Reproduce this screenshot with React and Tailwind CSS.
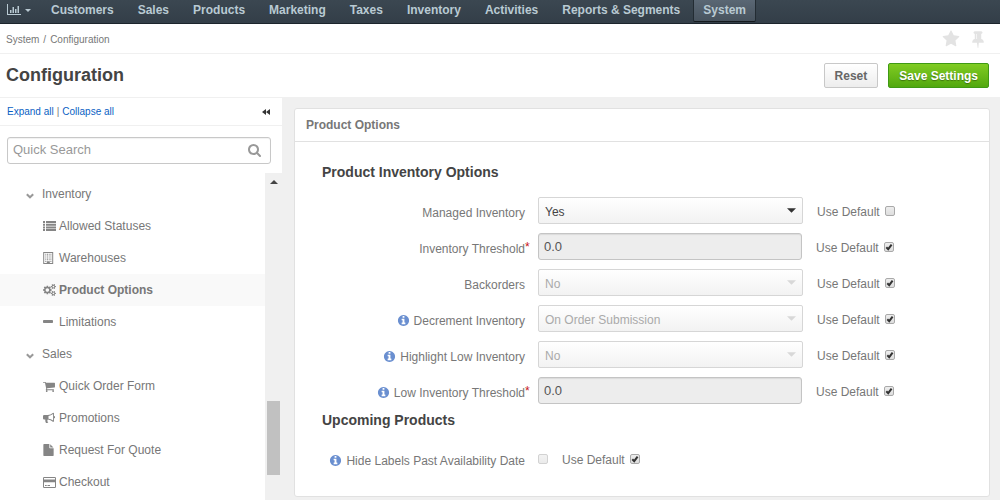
import React from "react";

const Glyph = ({ d, className, box = "0 0 1792 1792" }) => (
  <svg viewBox={box} className={className} fill="currentColor" aria-hidden="true">
    <path d={d} />
  </svg>
);

const SEARCH =
  "M1216 832q0-185-131.5-316.5t-316.5-131.5-316.5 131.5-131.5 316.5 131.5 316.5 316.5 131.5 316.5-131.5 131.5-316.5zm512 832q0 52-38 90t-90 38q-54 0-90-38l-343-342q-179 124-399 124-143 0-273.5-55.5t-225-150-150-225-55.5-273.5 55.5-273.5 150-225 225-150 273.5-55.5 273.5 55.5 225 150 150 225 55.5 273.5q0 220-124 399l343 343q37 37 37 90z";
const CART =
  "M704 1536q0 52-38 90t-90 38-90-38-38-90 38-90 90-38 90 38 38 90zm896 0q0 52-38 90t-90 38-90-38-38-90 38-90 90-38 90 38 38 90zm128-1088v512q0 24-16.5 42.5t-40.5 21.5l-1044 122q13 60 13 70 0 16-24 64h920q26 0 45 19t19 45-19 45-45 19h-1024q-26 0-45-19t-19-45q0-11 8-31.5t16-36 21.5-40 15.5-29.5l-177-823h-204q-26 0-45-19t-19-45 19-45 45-19h256q16 0 28.5 6.5t19.5 15.5 13 24.5 8 26 5.5 29.5 4.5 26h1201q26 0 45 19t19 45z";
const INFO =
  "M1152 1376v-160q0-14-9-23t-23-9h-96v-512q0-14-9-23t-23-9h-320q-14 0-23 9t-9 23v160q0 14 9 23t23 9h96v320h-96q-14 0-23 9t-9 23v160q0 14 9 23t23 9h448q14 0 23-9t9-23zm-128-896v-160q0-14-9-23t-23-9h-192q-14 0-23 9t-9 23v160q0 14 9 23t23 9h192q14 0 23-9t9-23zm640 416q0 209-103 385.5t-279.5 279.5-385.5 103-385.5-103-279.5-279.5-103-385.5 103-385.5 279.5-279.5 385.5-103 385.5 103 279.5 279.5 103 385.5z";
const PIN =
  "M800 864v-448q0-14-9-23t-23-9-23 9-9 23v448q0 14 9 23t23 9 23-9 9-23zm672 352q0 26-19 45t-45 19h-429l-51 483q-2 12-10.5 20.5t-20.5 8.5h-1q-27 0-32-27l-76-485h-404q-26 0-45-19t-19-45q0-123 78.5-221.5t177.5-98.5v-512q-52 0-90-38t-38-90 38-90 90-38h640q52 0 90 38t38 90-38 90-90 38v512q99 0 177.5 98.5t78.5 221.5z";
const STAR =
  "M1728 647q0 22-26 48l-363 354 86 500q1 7 1 20 0 21-10.5 35.5t-30.5 14.5q-19 0-40-12l-449-236-449 236q-22 12-40 12-21 0-31.5-14.5t-10.5-35.5q0-6 2-20l86-500-364-354q-25-27-25-48 0-37 56-46l502-73 225-455q19-41 49-41t49 41l225 455 502 73q56 9 56 46z";
const FILE =
  "M1152 512v-472q22 14 36 28l408 408q14 14 28 36h-472zm-128 32q0 40 28 68t68 28h544v1056q0 40-28 68t-68 28h-1344q-40 0-68-28t-28-68v-1600q0-40 28-68t68-28h800v544z";
const COGS =
  "M896 896q0-106-75-181t-181-75-181 75-75 181 75 181 181 75 181-75 75-181zm768 512q0-52-38-90t-90-38-90 38-38 90q0 53 37.5 90.5t90.5 37.5 90.5-37.5 37.5-90.5zm0-1024q0-52-38-90t-90-38-90 38-38 90q0 53 37.5 90.5t90.5 37.5 90.5-37.5 37.5-90.5zm-384 421v185q0 10-7 19.5t-16 10.5l-155 24q-11 35-32 76 34 48 90 115 7 11 7 20 0 12-7 19-23 30-82.5 89.5t-78.5 59.5q-11 0-21-7l-115-90q-37 19-77 31-11 108-23 155-7 24-30 24h-186q-11 0-20-7.5t-10-17.5l-23-153q-34-10-75-31l-118 89q-7 7-20 7-11 0-21-8-144-133-144-160 0-9 7-19 10-14 41-53t47-61q-23-44-35-82l-152-24q-10-1-17-9.5t-7-19.5v-185q0-10 7-19.5t16-10.5l155-24q11-35 32-76-34-48-90-115-7-11-7-20 0-12 7-20 22-30 82-89t79-59q11 0 21 7l115 90q34-18 77-32 11-108 23-154 7-24 30-24h186q11 0 20 7.5t10 17.5l23 153q34 10 75 31l118-89q8-7 20-7 11 0 21 8 144 133 144 160 0 8-7 19-12 16-42 54t-45 60q23 48 34 82l152 23q10 2 17 10.5t7 19.5zm640 533v140q0 16-149 31-12 27-30 52 51 113 51 138 0 4-4 7-122 71-124 71-8 0-46-47t-52-68q-20 2-30 2t-30-2q-14 21-52 68t-46 47q-2 0-124-71-4-3-4-7 0-25 51-138-18-25-30-52-149-15-149-31v-140q0-16 149-31 13-29 30-52-51-113-51-138 0-4 4-7 4-2 35-20t59-34 30-16q8 0 46 46.5t52 67.5q20-2 30-2t30 2q51-71 92-112l6-2q4 0 124 70 4 3 4 7 0 25-51 138 17 23 30 52 149 15 149 31zm0-1024v140q0 16-149 31-12 27-30 52 51 113 51 138 0 4-4 7-122 71-124 71-8 0-46-47t-52-68q-20 2-30 2t-30-2q-14 21-52 68t-46 47q-2 0-124-71-4-3-4-7 0-25 51-138-18-25-30-52-149-15-149-31v-140q0-16 149-31 13-29 30-52-51-113-51-138 0-4 4-7 4-2 35-20t59-34 30-16q8 0 46 46.5t52 67.5q20-2 30-2t30 2q51-71 92-112l6-2q4 0 124 70 4 3 4 7 0 25-51 138 17 23 30 52 149 15 149 31z";

const ListIcon = () => (
  <svg viewBox="0 0 13 12" className="h-3 w-[13px]" fill="currentColor" aria-hidden="true">
    <path d="M0 1h2v2H0zM3 1h10v2H3zM0 3.700h2v2H0zM3 3.700h10v2H3zM0 6.400h2v2H0zM3 6.400h10v2H3zM0 9.100h2v2H0zM3 9.100h10v2H3z" />
  </svg>
);

const BuildingIcon = () => (
  <svg viewBox="0 0 11 12" className="h-3 w-[11px]" fill="currentColor" aria-hidden="true">
    <path
      fillRule="evenodd"
      d="M.2 0h10v12H.2zM1.200.9v10.200h2.600V9.200h3v1.900h2.400V.9z"
    />
    <path d="M2.3 1.8h1v1h-1zM4 1.8h1v1H4zM5.7 1.8h1v1h-1zM7.4 1.8h1v1h-1zM2.3 3.6h1v1h-1zM4 3.6h1v1H4zM5.7 3.6h1v1h-1zM7.4 3.6h1v1h-1zM2.3 5.4h1v1h-1zM4 5.4h1v1H4zM5.7 5.4h1v1h-1zM7.4 5.4h1v1h-1zM2.3 7.2h1v1h-1zM4 7.2h1v1H4zM5.7 7.2h1v1h-1zM7.4 7.2h1v1h-1zM2.3 9h1v1h-1zM7.4 9h1v1h-1z" />
  </svg>
);

const MinusIcon = () => (
  <svg viewBox="0 0 10 12" className="h-3 w-[10px]" fill="currentColor" aria-hidden="true">
    <rect y="4" width="10" height="3" rx="0.8" />
  </svg>
);

const HornIcon = () => (
  <svg viewBox="0 0 12 12" className="h-3 w-3" fill="currentColor" aria-hidden="true">
    <path
      fillRule="evenodd"
      d="M11 4a1.1 1.1 0 0 1 0 2.2v2.9q0 .8-.8.8Q7.500 7.700 5 7.500q-.9.4-.5 1.300-.4.700.8 1.500-.5 1-2.300.6-.9-1.600-.7-3.400H1.100Q0 7.400 0 6.400V4.200Q0 3 1.100 3H4.800Q7.500 3 10.200.700q.8 0 .8.800zM10.100 2Q7.900 3.700 5.500 3.900v2.800q2.400.2 4.600 1.900z"
    />
  </svg>
);

const CardIcon = () => (
  <svg viewBox="0 0 13 11" className="h-[11px] w-[13px]" fill="currentColor" aria-hidden="true">
    <path fillRule="evenodd" d="M1.200 0h10.600Q13 0 13 1.200v8.600q0 1.200-1.200 1.200H1.200Q0 11 0 9.800V1.200Q0 0 1.200 0zM1 .9v1.600h11V.9zM1 5.300v4.800h11V5.300z" />
    <path d="M2 8.100h1.700V9H2zM4.500 8.100H7V9H4.500z" />
  </svg>
);

const ChartIcon = () => (
  <svg viewBox="0 0 14 12" className="h-3 w-[14px]" fill="currentColor" aria-hidden="true">
    <path d="M0 0h1v10h13v1H0zM3 6h1.500v3H3zM5.500 3H7v6H5.500zM8 5h1.500v4H8zM10.500 2H12v7h-1.500z" />
  </svg>
);

const Chevron = () => (
  <svg viewBox="0 0 8 6" className="mt-[3px] h-[6px] w-2" fill="none" aria-hidden="true">
    <path d="M.8 1.200L4 4.300L7.200 1.200" stroke="#999" strokeWidth="2" />
  </svg>
);

const Caret = ({ className }) => (
  <svg viewBox="0 0 8 4" className={className} fill="currentColor" aria-hidden="true">
    <path d="M0 0h8L4 4z" />
  </svg>
);

const modules = ["Customers", "Sales", "Products", "Marketing", "Taxes", "Inventory", "Activities", "Reports & Segments"];

const tree = [
  {
    name: "Inventory",
    items: [
      { name: "Allowed Statuses", icon: <ListIcon /> },
      { name: "Warehouses", icon: <BuildingIcon /> },
      { name: "Product Options", icon: <Glyph d={COGS} box="0 0 1920 1792" className="h-3 w-[13px]" />, active: true },
      { name: "Limitations", icon: <MinusIcon /> },
    ],
  },
  {
    name: "Sales",
    items: [
      { name: "Quick Order Form", icon: <Glyph d={CART} box="64 128 1664 1536" className="h-[11px] w-3" /> },
      { name: "Promotions", icon: <HornIcon /> },
      { name: "Request For Quote", icon: <Glyph d={FILE} box="128 0 1536 1792" className="h-3 w-[11px]" /> },
      { name: "Checkout", icon: <CardIcon /> },
    ],
  },
];

function Check({ id, defaultChecked, disabled }) {
  return (
    <span className="grid">
      <input
        id={id}
        type="checkbox"
        defaultChecked={defaultChecked}
        disabled={disabled}
        className="peer col-start-1 row-start-1 size-[10px] appearance-none rounded-xs border border-[#a9a9a9] bg-linear-to-b from-[#ededed] to-[#dedede] disabled:border-[#d2d2d2] disabled:from-[#f2f2f2] disabled:to-[#ebebeb]"
      />
      <svg
        viewBox="0 0 10 10"
        className="pointer-events-none invisible col-start-1 row-start-1 size-[10px] peer-checked:visible"
        aria-hidden="true"
      >
        <path d="M2.300 5.300L4.200 7.200L7.600 2.700" fill="none" stroke="#333" strokeWidth="2" />
      </svg>
    </span>
  );
}

function UseDefault({ id, checked }) {
  return (
    <span className="flex items-center gap-[5px]">
      <label htmlFor={id} className="pt-[2px]">Use Default</label>
      <Check id={id} defaultChecked={checked} />
    </span>
  );
}

function FieldLabel({ htmlFor, text, info, required }) {
  return (
    <>
      <span className="flex w-[203px] shrink-0 items-center justify-end gap-1 pt-1">
        {info && <Glyph d={INFO} className="size-[13px] text-[#6a8fd0]" />}
        <label htmlFor={htmlFor} className="whitespace-nowrap">{text}</label>
      </span>
      <span className="w-[13px] shrink-0 text-[#c81717]">{required ? "*" : ""}</span>
    </>
  );
}

function SelectRow({ id, text, value, info, enabled }) {
  return (
    <div className="flex h-[27px] items-center">
      <FieldLabel htmlFor={id} text={text} info={info} />
      <span className="mr-[14px] grid w-[265px] items-center">
        <select
          id={id}
          disabled={!enabled}
          className="col-start-1 row-start-1 h-[27px] appearance-none rounded-xs border border-[#d6d6d6] bg-linear-to-b from-white to-[#f2f2f2] pr-6 pl-[6px] pt-[2px] text-[#444] disabled:text-[#aaa] disabled:opacity-100"
        >
          <option>{value}</option>
        </select>
        <Caret
          className={
            enabled
              ? "pointer-events-none col-start-1 row-start-1 mr-[7px] h-[5px] w-[9px] justify-self-end text-[#333]"
              : "pointer-events-none col-start-1 row-start-1 mr-[7px] h-[5px] w-[9px] justify-self-end text-[#d8d8d8]"
          }
        />
      </span>
      <UseDefault id={id + "-default"} checked={!enabled} />
    </div>
  );
}

function InputRow({ id, text, value, info }) {
  return (
    <div className="flex h-[27px] items-center">
      <FieldLabel htmlFor={id} text={text} info={info} required />
      <input
        id={id}
        type="text"
        disabled
        defaultValue={value}
        className="mr-[14px] h-[27px] w-[264px] rounded-[3px] border border-[#c4c4c4] bg-[#ededed] px-[5px] text-[13px] text-[#555] shadow-[inset_0_1px_1px_rgba(0,0,0,0.08)]"
      />
      <UseDefault id={id + "-default"} checked />
    </div>
  );
}

export default function App() {
  return (
    <div className="flex h-screen flex-col overflow-hidden bg-[#f0f0f0] font-['Liberation_Sans',Arial,sans-serif] text-xs leading-4 text-[#777]">
      <nav className="flex h-6 shrink-0 items-start gap-[2px] border-b border-[#1c252c] bg-linear-to-b from-[#3b4751] to-[#333e48] font-bold text-[#b9cad3]">
        <button type="button" aria-label="Dashboards" className="flex h-[22px] w-[38px] items-center gap-1 pb-[2px] pl-[7px]">
          <ChartIcon />
          <Caret className="h-[3px] w-[6px]" />
        </button>
        {modules.map((m) => (
          <a key={m} href="#" className="h-[22px] whitespace-nowrap border-x border-transparent px-[10px] pt-[2px]">
            {m}
          </a>
        ))}
        <a
          href="#"
          aria-current="page"
          className="h-[22px] rounded-b-xs border border-t-0 border-[#232c33] border-b-[#14191d] bg-linear-to-b from-[#5a6774] to-[#48535e] px-[9px] pt-[2px]"
        >
          System
        </a>
      </nav>

      <div className="flex h-[30px] shrink-0 items-center justify-between border-b border-[#f0f0f0] bg-white pr-[13px] pl-[6px]">
        <div className="flex gap-1 pt-[2px] text-[10px]">
          <a href="#">System</a>
          <span>/</span>
          <span>Configuration</span>
        </div>
        <div className="flex items-center gap-[9px] text-[#e3e3e3]">
          <button type="button" aria-label="Add to favorites"><Glyph d={STAR} className="size-[18px]" /></button>
          <button type="button" aria-label="Pin page"><Glyph d={PIN} className="size-[18px]" /></button>
        </div>
      </div>

      <header className="flex h-[44px] shrink-0 items-center justify-between border-b border-[#f0f0f0] bg-white pr-[11px] pl-[6px]">
        <h1 className="pb-[2px] text-lg font-bold text-[#444]">Configuration</h1>
        <div className="flex gap-[10px] font-bold">
          <button
            type="button"
            className="h-[25px] rounded-xs border border-[#c8c8c8] bg-linear-to-b from-white to-[#ededed] px-[10px] text-[#666]"
          >
            Reset
          </button>
          <button
            type="button"
            className="h-[25px] rounded-xs border border-[#3f9a14] bg-linear-to-b from-[#80cc22] to-[#52a80f] px-[10px] text-white text-shadow-[0_1px_1px_rgba(0,0,0,0.35)]"
          >
            Save Settings
          </button>
        </div>
      </header>

      <div className="flex min-h-0 flex-1">
        <aside className="flex w-[282px] shrink-0 flex-col bg-white">
          <div className="flex h-7 shrink-0 items-center justify-between border-b border-[#f0f0f0] pr-3 pl-[7px] text-[10px]">
            <div className="flex gap-[3px]">
              <a href="#" className="text-[#0a5fc4]">Expand all</a>
              <span>|</span>
              <a href="#" className="text-[#0a5fc4]">Collapse all</a>
            </div>
            <button type="button" aria-label="Collapse sidebar" className="text-[#333]">
              <svg viewBox="0 0 8 6" className="h-[6px] w-2" fill="currentColor" aria-hidden="true">
                <path d="M0 3L4 0v6zM4 3L8 0v6z" />
              </svg>
            </button>
          </div>
          <div className="mt-[11px] mr-[11px] mb-[9px] ml-[7px] flex h-[27px] shrink-0 items-center rounded-[3px] border border-[#c8c8c8] pr-[9px] pl-[5px] shadow-[inset_0_1px_1px_rgba(0,0,0,0.06)]">
            <input
              type="text"
              aria-label="Quick Search"
              placeholder="Quick Search"
              className="min-w-0 flex-1 pb-[2px] text-[13px] outline-none placeholder:text-[#999]"
            />
            <Glyph d={SEARCH} box="64 128 1664 1664" className="size-[13px] text-[#999]" />
          </div>
          <div className="flex min-h-0 flex-1">
            <ul className="flex-1 overflow-hidden pt-[5px]">
              {tree.map((g) => (
                <li key={g.name}>
                  <button type="button" className="flex h-8 w-full items-center gap-2 pl-[26px]">
                    <Chevron />
                    {g.name}
                  </button>
                  <ul>
                    {g.items.map((i) => (
                      <li key={i.name}>
                        <a
                          href="#"
                          className={
                            i.active
                              ? "flex h-8 items-center bg-[#f9f9f9] pl-[43px] font-bold"
                              : "flex h-8 items-center pl-[43px]"
                          }
                        >
                          <span className="w-4 shrink-0 text-[#858585]">{i.icon}</span>
                          {i.name}
                        </a>
                      </li>
                    ))}
                  </ul>
                </li>
              ))}
            </ul>
            <div className="flex w-[17px] shrink-0 flex-col items-center bg-[#f0f0f0]" aria-hidden="true">
              <div className="flex h-[18px] shrink-0 items-center">
                <Caret className="h-1 w-2 rotate-180 text-[#444]" />
              </div>
              <div className="mt-[210px] h-[74px] w-[13px] shrink-0 bg-[#c1c1c1]" />
            </div>
          </div>
        </aside>

        <main className="min-w-0 flex-1 pt-[10px] pr-[10px] pl-3">
          <section className="rounded-[3px] border border-[#e1e1e1] bg-white">
            <h2 className="h-[33px] border-b border-[#e1e1e1] pt-2 pl-[11px] font-bold">Product Options</h2>
            <form className="px-[27px] pb-6">
              <h3 className="pt-5 pb-[15px] text-sm leading-5 font-bold text-[#444]">Product Inventory Options</h3>
              <div className="flex flex-col gap-[9px]">
                <SelectRow id="managed" text="Managed Inventory" value="Yes" enabled />
                <InputRow id="threshold" text="Inventory Threshold" value="0.0" />
                <SelectRow id="backorders" text="Backorders" value="No" />
                <SelectRow id="decrement" text="Decrement Inventory" value="On Order Submission" info />
                <SelectRow id="highlight" text="Highlight Low Inventory" value="No" info />
                <InputRow id="low" text="Low Inventory Threshold" value="0.0" info />
              </div>
              <h3 className="pt-[6px] pb-[15px] text-sm leading-5 font-bold text-[#444]">Upcoming Products</h3>
              <div className="flex h-[27px] items-center">
                <FieldLabel htmlFor="hide" text="Hide Labels Past Availability Date" info />
                <span className="mr-[14px]">
                  <Check id="hide" disabled />
                </span>
                <UseDefault id="hide-default" checked />
              </div>
            </form>
          </section>
        </main>
      </div>
    </div>
  );
}
